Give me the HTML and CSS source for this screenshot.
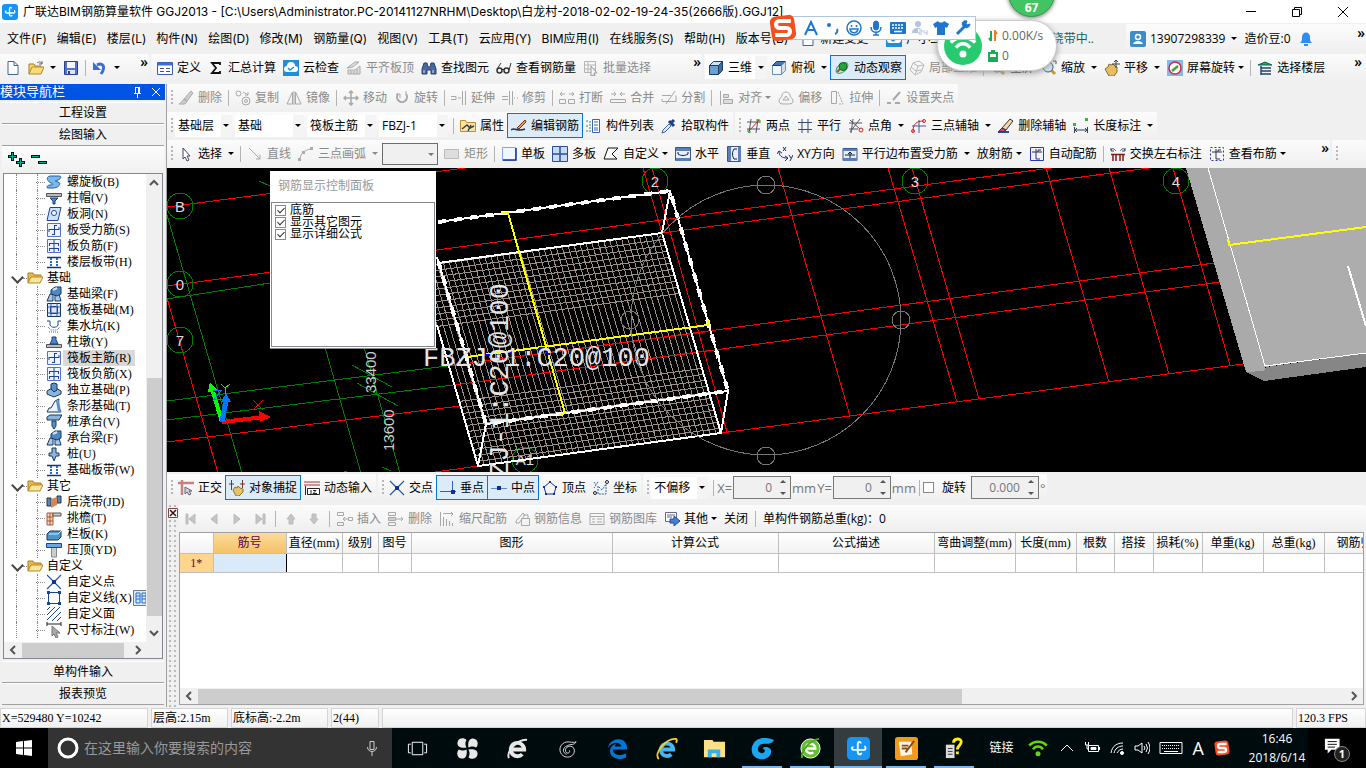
FILE: index.html
```html
<!DOCTYPE html>
<html lang="zh-CN">

<head>
    <meta charset="UTF-8">
    <meta name="viewport" content="width=device-width, initial-scale=1.0">
    <title>广联达BIM钢筋算量软件 GGJ2013</title>
    <link rel="stylesheet" href="styles.css">
</head>

<body>
    <svg class="sprite" aria-hidden="true">
        <!-- app / file -->
        <symbol id="logo" viewBox="0 0 16 16"><rect width="16" height="16" rx="3" fill="#1595f5" stroke="none"/><path d="M9.5 4.5C9.500 3 7.500 3 7.500 5v5.500c0 2 2.500 2 2.500.500M4.500 7C3 7 3 9 5 9h6.500c2 0 1.500-2.500.500-2.500" stroke="#fff" stroke-width="1.300"/></symbol>
        <symbol id="new" viewBox="0 0 16 16"><path d="M3 1.500h6l4 4v9H3z" fill="#fff" stroke="#41659b"/><path d="M9 1.500v4h4" stroke="#41659b"/></symbol>
        <symbol id="open" viewBox="0 0 16 16"><path d="M1 14V4h5l1 2h6v2" fill="#f7d774" stroke="#a97b1c"/><path d="M1 14l3-7h12l-3 7z" fill="#fbdc7b" stroke="#b5862a"/><path d="M9 3c2-2 4-1 5 1m0-3v3h-3" stroke="#567"/></symbol>
        <symbol id="save" viewBox="0 0 16 16"><path d="M1.500 1.500h13v13h-13z" fill="#5572c9" stroke="#2b3f96"/><path d="M4 2h8v6H4z" fill="#f4f6fc" stroke="none"/><path d="M4 10h8v4H4z" fill="#dfe4f5" stroke="none"/><path d="M6 11v3" stroke="#2b3f96" stroke-width="2"/></symbol>
        <symbol id="undo" viewBox="0 0 16 16"><path d="M5 5c6-3 9 2 4 9" stroke="#3a6fd0" stroke-width="3"/><path d="M1 2v8h8z" fill="#3a6fd0" stroke="none"/></symbol>
        <!-- standard -->
        <symbol id="define" viewBox="0 0 16 16"><path d="M.5 2.500h15v12H.5z" fill="#fff" stroke="#3b5fae"/><path d="M1 4h14" stroke="#3b6fd6" stroke-width="3"/><path d="M3 8.500h4M3 11.500h4M9 8.500h4M9 11.500h4" stroke="#456"/></symbol>
        <symbol id="sigma" viewBox="0 0 16 16"><path d="M12 5V3H4l4 5-4 5h8v-2" stroke="#111" stroke-width="1.800"/></symbol>
        <symbol id="cloud" viewBox="0 0 16 16"><path d="M0 0h16v16H0z" fill="#1f8fdc" stroke="none"/><path d="M4 12a3 3 0 0 1 0-6 4 4 0 0 1 8 0 3 3 0 0 1 0 6z" fill="#fff" stroke="none"/><path d="M5 8l2 2 4-3" stroke="#1f8fdc" stroke-width="1.500"/></symbol>
        <symbol id="level" viewBox="0 0 16 16"><path d="M1 8l8-6h4L7 7zM2 10v4h12V6l-5 4zM5 11v3M8 11v3M11 9v5" stroke="#aaa" fill="#ddd"/></symbol>
        <symbol id="binoc" viewBox="0 0 16 16"><path d="M1 9l2-6h3l1 4h2l1-4h3l2 6v5h-5v-4H6v4H1z" fill="#49689f" stroke="#2a3f6b"/><path d="M3 10v3M12 10v3" stroke="#c9dcf5"/></symbol>
        <symbol id="glasses" viewBox="0 0 16 16"><circle cx="3.500" cy="10.500" r="2.500" stroke="#333" stroke-width="1.500"/><circle cx="10.500" cy="10.500" r="2.500" stroke="#333" stroke-width="1.500"/><path d="M6 9.500h2M1 9l4-6M13 10l2-7" stroke="#333"/></symbol>
        <symbol id="batch" viewBox="0 0 16 16"><path d="M1.500 1.500h11v11h-11zM1 5h11M1 9h11M5 1v11" stroke="#b5b5b5"/><path d="M8 6l6 7h-3l1 3-2-1-2 1z" fill="#f4f4f4" stroke="#999"/></symbol>
        <!-- view -->
        <symbol id="cube" viewBox="0 0 16 16"><path d="M1.500 5.500h9v9h-9z" fill="#6f9fd0" stroke="#1d3d66"/><path d="M1.500 5.500l4-4h9l-4 4z" fill="#cfe2f5" stroke="#1d3d66"/><path d="M10.500 5.500l4-4v9l-4 4z" fill="#3f6ea5" stroke="#1d3d66"/></symbol>
        <symbol id="cubetop" viewBox="0 0 16 16"><path d="M1.500 5.500h9v9h-9z" fill="#f2f7fc" stroke="#6a8fbb"/><path d="M1.500 5.500l4-4h9l-4 4z" fill="#3f78b8" stroke="#1d3d66"/><path d="M10.500 5.500l4-4v9l-4 4z" fill="#cfe0f2" stroke="#6a8fbb"/></symbol>
        <symbol id="orbit" viewBox="0 0 16 16"><ellipse cx="8" cy="8" rx="7" ry="4" transform="rotate(-40 8 8)" stroke="#5a8f74" fill="#bfe6d0"/><circle cx="9" cy="6.500" r="4" fill="#28a23a" stroke="#146022"/><path d="M3 12l3-3" stroke="#d33" stroke-width="2"/></symbol>
        <symbol id="part3d" viewBox="0 0 16 16"><path d="M1 10l3-7 6-2 5 4-3 7-6 3zM4 3l5 3 6-1M9 6l-3 9M2 7l5 4 6-1" stroke="#bbb"/></symbol>
        <symbol id="lens" viewBox="0 0 16 16"><path d="M10 10l4 4" stroke="#c99a2e" stroke-width="3"/><circle cx="7" cy="7" r="5" fill="#d9ecfb" stroke="#34547e"/><path d="M1 4V1h3M15 4V1h-3" stroke="#34547e"/></symbol>
        <symbol id="hand" viewBox="0 0 16 16"><path d="M1 9l3-2 1-3 2 1 2-1 2 2 2 1v5l-3 4H5z" fill="#e6bd62" stroke="#8d6a22"/><path d="M12 0v8M8 4h8M10 2l2-2 2 2" stroke="#345"/></symbol>
        <symbol id="screenrot" viewBox="0 0 16 16"><path d="M0 0h16v16H0z" fill="#7fbde8" stroke="none"/><circle cx="8" cy="8" r="6" fill="#fff" stroke="#d24" stroke-width="1.500"/><path d="M5 11l6-5" stroke="#3a3" stroke-width="2.500"/></symbol>
        <symbol id="floors" viewBox="0 0 16 16"><path d="M1 5l7-3 7 3z" fill="#2c9a78" stroke="#14604a"/><path d="M4 8h10M4 11h10M4 14h10M4 6v9" stroke="#24446e" stroke-width="1.500"/></symbol>
        <!-- edit -->
        <symbol id="brush" viewBox="0 0 16 16"><path d="M6 9l7-8 2 2-6 8zM6 9l3 2c-1 4-4 3-8 3 3-1 3-4 5-5z" fill="#ccc" stroke="#aaa"/></symbol>
        <symbol id="copy" viewBox="0 0 16 16"><circle cx="3.500" cy="3.500" r="2.500"/><circle cx="11" cy="11" r="4"/><circle cx="11" cy="11" r="1.500"/><path d="M8 2l5 3m0-3v3h-3"/></symbol>
        <symbol id="mirror" viewBox="0 0 16 16"><path d="M6.500 2v12H1zM9.500 2v12H15zM8 1v14"/></symbol>
        <symbol id="move" viewBox="0 0 16 16"><path d="M8 1v14M1 8h14M6 3l2-2 2 2M6 13l2 2 2-2M3 6L1 8l2 2M13 6l2 2-2 2" stroke-width="1.500"/></symbol>
        <symbol id="rotate" viewBox="0 0 16 16"><path d="M4 4a5 5 0 1 0 8 0" stroke-width="2"/><path d="M2 4h4v4M12 4V1"/></symbol>
        <symbol id="extend" viewBox="0 0 16 16"><path d="M0 6.500h5v3H0M7 8h3M11.500 1v14M14.500 1v14"/></symbol>
        <symbol id="trim" viewBox="0 0 16 16"><path d="M0 6.500h6M0 9.500h6M7.500 1v14M10.500 1v14M12 8h1M15 8h1"/></symbol>
        <symbol id="break" viewBox="0 0 16 16"><path d="M1 4h5M10 4h5M3 2L1 4l2 2M13 2l2 2-2 2M.5 9.500h6v4h-6zM9.500 9.500h6v4h-6z"/></symbol>
        <symbol id="merge" viewBox="0 0 16 16"><path d="M1 4h5M10 4h5M4 2l2 2-2 2M12 2l-2 2 2 2M.5 9.500h15v3H.5z"/></symbol>
        <symbol id="split" viewBox="0 0 16 16"><path d="M1 5.500h9M1 11.500h14v-6M1 11V9M14 1L5 14"/></symbol>
        <symbol id="align" viewBox="0 0 16 16"><path d="M2.500 1v14M5.500 9.500h9v4h-9zM5.500 4.500h5v3h-5z" fill="#ddd"/></symbol>
        <symbol id="offset" viewBox="0 0 16 16"><path d="M1 11c0-3 3-3 3-6 1-4 7-4 8 0 0 3 3 3 3 6 0 3-3 3-7 3s-7 0-7-3z"/><path d="M5 10l3-4 3 4z"/></symbol>
        <symbol id="stretch" viewBox="0 0 16 16"><path d="M2.500 1.500h5v12h-5z"/><path d="M9 2l5 12H9" stroke-dasharray="2 1"/></symbol>
        <symbol id="grippt" viewBox="0 0 16 16"><path d="M1 13h4M7 10l7-8M9 13h5" stroke-width="2"/></symbol>
        <!-- component -->
        <symbol id="props" viewBox="0 0 16 16"><path d="M.5 2.500h5l1 2h9v9H.5z" fill="#fbe3a4" stroke="#c18a2a"/><path d="M2 11l5-4 3 3 4-2M8 13l3-6" stroke="#345" stroke-width="1.500"/></symbol>
        <symbol id="editbar" viewBox="0 0 16 16"><path d="M0 12c4-3 6 2 14-1" stroke="#234" stroke-width="1.500"/><path d="M6 10l8-8 1 2-7 7z" fill="#e9a13b" stroke="#7c2a1c"/></symbol>
        <symbol id="list" viewBox="0 0 16 16"><path d="M0 3h3M0 8h3M0 13h3M4 3v11" stroke="#2f8f5b" stroke-dasharray="2 1"/><path d="M6.500 1.500h7v13h-7z" fill="#fff" stroke="#3a62ad"/><path d="M8 4h4M8 7h4M8 10h4M8 12h4" stroke="#3a62ad"/></symbol>
        <symbol id="pick" viewBox="0 0 16 16"><path d="M1 15l1-3 6-6 2 2-6 6z" fill="#dfeafa" stroke="#3a62ad"/><path d="M8 3l5 5M10 5l3-3" stroke="#1d3f8c" stroke-width="3"/></symbol>
        <symbol id="axis2" viewBox="0 0 16 16"><path d="M1 4h13M1 11h13M5 1l-2 14M12 1l-2 14" stroke="#556"/><path d="M3 13L13 2" stroke="#b22"/><path d="M10 2h4v3M2 11v3h3" stroke="#2a2"/></symbol>
        <symbol id="axispar" viewBox="0 0 16 16"><path d="M1 4.500h14M1 11.500h14M5 1v14M11 1v14" stroke="#334a7c"/></symbol>
        <symbol id="axisang" viewBox="0 0 16 16"><path d="M1 5h13M1 11h9M5 1L3 15M12 1L2 14M2 2l10 9" stroke="#556"/><circle cx="13" cy="12" r="2" stroke="#d22"/></symbol>
        <symbol id="axis3" viewBox="0 0 16 16"><path d="M2 14C2 6 5 3 13 3" stroke="#d22"/><path d="M1 8h14M8 2v13" stroke="#44549c"/><circle cx="13" cy="3" r="1.500" stroke="#d22"/><circle cx="2" cy="13" r="1.500" stroke="#d22"/></symbol>
        <symbol id="erase" viewBox="0 0 16 16"><path d="M0 14h11" stroke="#234f9c" stroke-width="2"/><path d="M4 10l8-9 3 2-7 9z" fill="#f3d9a0" stroke="#334"/><path d="M4 10l4 2-3 2-4-1z" fill="#d46" stroke="#334"/></symbol>
        <symbol id="dim" viewBox="0 0 16 16"><path d="M1.500 9v6M14.500 9v6M2 12h12M4 10l-2 2 2 2M12 10l2 2-2 2" stroke="#345"/><path d="M0 5h3v3H0zM12 0h3v3h-3z" fill="#3b3" stroke="none"/></symbol>
        <!-- draw -->
        <symbol id="pointer" viewBox="0 0 16 16"><path d="M5 2v11l2-2 2 4 2-1-2-4h3z" fill="#fff" stroke="#446"/></symbol>
        <symbol id="line" viewBox="0 0 16 16"><path d="M2 2l11 11M13 9v4H9"/></symbol>
        <symbol id="arc" viewBox="0 0 16 16"><path d="M2 14C2 8 6 4 13 3"/><path d="M0 12h3v3H0zM12 1h3v3h-3zM4 5h3v3H4z" fill="#aaa" stroke="none"/></symbol>
        <symbol id="rect" viewBox="0 0 16 16"><path d="M.5 3.500h14v9H.5z" fill="#ddd" stroke="#bbb"/></symbol>
        <symbol id="slab" viewBox="0 0 16 16"><path d="M1.500 1.500h13v13h-13z" fill="#f0f6ff" stroke="#8aa6e0"/><path d="M2 14h13V2" stroke="#13309a" stroke-width="1.500"/></symbol>
        <symbol id="slabs" viewBox="0 0 16 16"><path d="M.5.5h15v15H.5z" fill="#c6dbf5" stroke="#2b4f96"/><path d="M8 1v14M1 8h14" stroke="#2b4f96" stroke-width="1.500"/></symbol>
        <symbol id="poly" viewBox="0 0 16 16"><path d="M5 2h10L9 8l5 5H1z" fill="#fff" stroke="#111"/></symbol>
        <symbol id="horiz" viewBox="0 0 16 16"><path d="M.5 1.500h15v13H.5z" fill="#e6effa" stroke="#3a5590"/><path d="M1 2h14v3H1zM1 12h14v3H1z" fill="#5d7fb8" stroke="none"/><path d="M3 6v2c3 2 7 2 10 0V6" stroke="#123"/></symbol>
        <symbol id="vert" viewBox="0 0 16 16"><path d="M1.500.5h13v15h-13z" fill="#e6effa" stroke="#3a5590"/><path d="M2 1h3v14H2zM12 1h3v14h-3z" fill="#5d7fb8" stroke="none"/><path d="M11 3H8c-2 3-2 7 0 10h3" stroke="#123"/></symbol>
        <symbol id="xy" viewBox="0 0 16 16"><path d="M2 5c0 5 3 7 8 7M0 8l2-3 3 2M8 10l3 2-3 3M6 1l3 4M9 1L6 5M12 9l2 3m2-3l-3 6" stroke="#1c2f6e"/></symbol>
        <symbol id="edgebar" viewBox="0 0 16 16"><path d="M1 2.500h14v12H1z" fill="#e6effa" stroke="#3a5590"/><path d="M1 3h14v2H1zM1 12h14v3H1z" fill="#5d7fb8" stroke="none"/><path d="M3 9h10M8 6v6M6 8l2-2 2 2" stroke="#123"/></symbol>
        <symbol id="barS" viewBox="0 0 16 16"><path d="M1.500 1.500h13v13h-13z" fill="#eef3fe" stroke="#5672c8"/><path d="M3 7.500h10M3 7v3M13 5v3M8.500 3v10M6 12.500h3M8 3.500h3" stroke="#1c458f"/></symbol>
        <symbol id="barF" viewBox="0 0 16 16"><path d="M1.500 1.500h13v13h-13z" fill="#eef3fe" stroke="#5672c8"/><path d="M3 5.500h10M3 10.500h10M8 2v12M3.500 5v3M12.500 5v3M3.500 10v3M12.500 10v3" stroke="#1c458f"/></symbol>
        <symbol id="autobar" viewBox="0 0 16 16"><path d="M1.500 1.500h13v13h-13z" fill="#eef3fe" stroke="#2a36b0"/><path d="M3 6h10M7 3v10M7 13h4M9 6V4h3" stroke="#334"/></symbol>
        <symbol id="swap" viewBox="0 0 16 16"><path d="M1 4c2-3 4 0 5 1M15 4c-2-3-4 0-5 1M1 2v3h3M15 2v3h-3" stroke="#345"/><path d="M1 8.500h14M3 9v6M6 9v6M10 9v6M13 9v6" stroke="#7c1c1c" stroke-width="1.500"/></symbol>
        <symbol id="viewbar" viewBox="0 0 16 16"><path d="M1.500 1.500h13v13h-13z" stroke="#2a36b0" stroke-dasharray="2 2"/><path d="M3 6h10M7 3v10M7 13h4M9 6V4h3" stroke="#334"/></symbol>
        <!-- snap -->
        <symbol id="ortho" viewBox="0 0 16 16"><path d="M0 3h16M4 0v15" stroke="#c98080" stroke-width="2.500"/><path d="M7 7v7l2-2 2 3 2-1-2-3h3z" fill="#ccd4dc" stroke="#667"/></symbol>
        <symbol id="osnap" viewBox="0 0 16 16"><path d="M2.500 0v10M13.500 0v8M0 4h5M11 4h5" stroke="#733"/><path d="M4 10l2-3 2 1 1-2 2 2 3 1v3l-4 4H7z" fill="#e6c367" stroke="#94702a"/></symbol>
        <symbol id="dyn" viewBox="0 0 16 16"><path d="M0 2h16M0 5h16" stroke="#a33"/><path d="M3.500 8.500h12v6h-12z" fill="#fff" stroke="#222"/><path d="M7 10v4M9 10.500h3l-3 3h4M1.500 6v9" stroke="#222"/></symbol>
        <symbol id="cross" viewBox="0 0 16 16"><path d="M1 1l14 14M15 1L1 15" stroke="#235a9e" stroke-width="1.200"/><path d="M6 6h4v4H6z" fill="#12309a" stroke="none"/></symbol>
        <symbol id="perp" viewBox="0 0 16 16"><path d="M0 11.500h16M12.500 1v11" stroke="#2d62b0"/><path d="M11 10h4v4h-4z" fill="#12309a" stroke="none"/></symbol>
        <symbol id="mid" viewBox="0 0 16 16"><path d="M0 8.500h16" stroke="#5b8ed0"/><path d="M6 6h4v4H6z" fill="#12309a" stroke="none"/></symbol>
        <symbol id="vertex" viewBox="0 0 16 16"><path d="M8 2l6 5-2 7H4L2 7z" stroke="#12309a"/><path d="M7 1h2v2H7zM1 6h2v2H1zM13 6h2v2h-2zM3 13h2v2H3zM11 13h2v2h-2z" fill="#12309a" stroke="none"/></symbol>
        <symbol id="coord" viewBox="0 0 16 16"><path d="M1 2l2 3M5 2L1 8M5 14V6l4 4 4-6v10z" stroke="#2d62b0" stroke-dasharray="2 1"/><circle cx="2" cy="13" r="1.500" stroke="#222"/><circle cx="14" cy="2" r="1.500" stroke="#222"/></symbol>
        <!-- record -->
        <symbol id="first" viewBox="0 0 16 16"><path d="M3 3h2v10H3zM12 3v10L6 8z" fill="#c4c4c4" stroke="#bbb"/></symbol>
        <symbol id="prev" viewBox="0 0 16 16"><path d="M11 3v10L5 8z" fill="#c4c4c4" stroke="#bbb"/></symbol>
        <symbol id="next" viewBox="0 0 16 16"><path d="M5 3v10l6-5z" fill="#c4c4c4" stroke="#bbb"/></symbol>
        <symbol id="last" viewBox="0 0 16 16"><path d="M11 3h2v10h-2zM4 3v10l6-5z" fill="#c4c4c4" stroke="#bbb"/></symbol>
        <symbol id="up" viewBox="0 0 16 16"><path d="M8 3l4 5h-2v5H6V8H4z" fill="#c4c4c4" stroke="#bbb"/></symbol>
        <symbol id="down" viewBox="0 0 16 16"><path d="M8 13l4-5h-2V3H6v5H4z" fill="#c4c4c4" stroke="#bbb"/></symbol>
        <symbol id="insrow" viewBox="0 0 16 16"><path d="M.5 1.500h6v3h-6zM.5 11.500h6v3h-6zM6 8h5M8 6L6 8l2 2M11.500 6.500h4v3h-4z"/></symbol>
        <symbol id="delrow" viewBox="0 0 16 16"><path d="M.5 1.500h7v3h-7zM.5 11.500h7v3h-7zM1 8h14M13 6l2 2-2 2M.5 6.500h7v3h-7z"/></symbol>
        <symbol id="scale" viewBox="0 0 16 16"><path d="M1.500 1v14M4 2.500h10M12 1l2 2-2 2M4.500 6v9M7.500 8v7M10.500 10v5M13.500 12v3"/></symbol>
        <symbol id="info" viewBox="0 0 16 16"><path d="M2 10l7-8 2 2-6 8H2zM7.500 7.500h8v7h-8zM9 4h5v4"/></symbol>
        <symbol id="lib" viewBox="0 0 16 16"><path d="M1 2.500h14v11H1zM1 5.500h14M3 8h3M3 11h3M8 8h5M8 11h5"/></symbol>
        <symbol id="other" viewBox="0 0 16 16"><path d="M1.500 1.500h11v9h-11zM3 4h8M3 6h5" stroke="#668" fill="#fff"/><path d="M6 8h4V5l6 5-6 5v-3H6z" fill="#4a7fd8" stroke="#234a94"/></symbol>
        <!-- tree -->
        <symbol id="t-spiral" viewBox="0 0 16 16"><path d="M4 2h9c3 0 2 3-1 4s-4 1 0 2 1 6-5 6H2c-2 0-1-3 2-3s4-1 1-2-6-6-1-7z" fill="#7db8e8" stroke="#1f5ca0"/></symbol>
        <symbol id="t-cap" viewBox="0 0 16 16"><path d="M.5 3.500h15v3H.5z" fill="#bbb" stroke="#555"/><path d="M4 8h8l-3 3v3H7v-3z" fill="#4f86d0" stroke="#153d80"/></symbol>
        <symbol id="t-hole" viewBox="0 0 16 16"><path d="M4 1.500h11l-3 13H1z" fill="#cfe0f8" stroke="#1c458f"/><circle cx="8" cy="7" r="2.500" fill="#fff" stroke="#1c458f"/></symbol>
        <symbol id="t-strip" viewBox="0 0 16 16"><path d="M1 3.500h14M1 13.500h14" stroke="#13357c" stroke-width="1.500"/><path d="M5 4v9M11 4v9" stroke="#2c66c8" stroke-width="2" stroke-dasharray="2 1"/></symbol>
        <symbol id="t-beam" viewBox="0 0 16 16"><path d="M1 15l3-7h3v7zM9 15V8h4l2 7z" fill="#a9c9ea" stroke="#17395f"/><path d="M5 8V4l4-3h6v7l-4 2z" fill="#4f86c4" stroke="#17395f"/><path d="M7 4l4-2" stroke="#cfe3f7" stroke-width="2"/></symbol>
        <symbol id="t-raft" viewBox="0 0 16 16"><path d="M1.500 1.500h13v13h-13zM4.500 4.500h7v7h-7z" fill="#dbe8fb" stroke="#12326e"/><path d="M5 1.500v13M11 1.500v13M1.500 5h13M1.500 11h13" stroke="#3a5fa8"/></symbol>
        <symbol id="t-pit" viewBox="0 0 16 16"><path d="M1 3h3v4c1 3 7 3 8 0V3h3" stroke="#1c458f"/><path d="M2 9l3 3 6 0 3-3M3 14h10" stroke="#2c66c8" stroke-dasharray="1 1"/></symbol>
        <symbol id="t-pier" viewBox="0 0 16 16"><path d="M.5 10.500h15v3H.5z" fill="#bbb" stroke="#555"/><path d="M4 10l2-4V3h4v3l2 4z" fill="#4f86d0" stroke="#153d80"/></symbol>
        <symbol id="t-iso" viewBox="0 0 16 16"><path d="M1 9l7-4 7 4v3l-7 3-7-3z" fill="#8cb4dc" stroke="#17395f"/><path d="M5 7V2l3-1 3 1v6l-3 2z" fill="#5c92c8" stroke="#17395f"/></symbol>
        <symbol id="t-tri" viewBox="0 0 16 16"><path d="M1 14l2-4h2l4-7 4-2-1 6 3 7z" fill="#eef4fc" stroke="#17395f"/><path d="M10 3l3-1 2 12h-3z" fill="#5c92c8" stroke="none"/></symbol>
        <symbol id="t-pilecap" viewBox="0 0 16 16"><path d="M1 3l3-2h12l-3 5H1z" fill="#8cb4dc" stroke="#17395f"/><path d="M6 7h4v5l-2 3-2-3z" fill="#5c92c8" stroke="#17395f"/></symbol>
        <symbol id="t-pile" viewBox="0 0 16 16"><path d="M6 2h4v5h3v3h-3l-2 5-2-5H3V7h3z" fill="#8cb4dc" stroke="#17395f"/></symbol>
        <symbol id="t-post" viewBox="0 0 16 16"><path d="M1 4h4v8H1zM11 2h4v7h-4z" fill="#5c82b8" stroke="#333"/><path d="M5 5l6-2v8l-6 3z" fill="#d08a5a" stroke="none"/></symbol>
        <symbol id="t-eave" viewBox="0 0 16 16"><path d="M1 3h6v12H1zM1 7h6M1 11h6M4 3v12" fill="#f5d3bc" stroke="#a35b36"/><path d="M7 3h8v3H7z" fill="#ccc" stroke="#555"/></symbol>
        <symbol id="t-rail" viewBox="0 0 16 16"><path d="M1 8l3-3h11v6l-3 3H1z" fill="#4f96c8" stroke="#17395f"/><path d="M3 8h9l3-3" stroke="#d5ebfa"/></symbol>
        <symbol id="t-coping" viewBox="0 0 16 16"><path d="M.5 1.500h15v4H.5z" fill="#6aa8e4" stroke="#1c458f"/><path d="M5.500 6v9h5V6" fill="#ccc" stroke="#888"/></symbol>
        <symbol id="t-cline" viewBox="0 0 16 16"><path d="M2.500 2.500h11v11h-11z" stroke="#1c458f"/><path d="M1 1h3v3H1zM12 1h3v3h-3zM1 12h3v3H1zM12 12h3v3h-3z" fill="#1c458f" stroke="none"/></symbol>
        <symbol id="t-cface" viewBox="0 0 16 16"><path d="M1 4l3-3M1 9l8-8M1 14L14 1M6 15l9-9M11 15l4-4" stroke="#1c458f"/></symbol>
        <symbol id="t-dim" viewBox="0 0 16 16"><path d="M1 0v4M15 0v4M1 2h14" stroke="#222"/><path d="M6 4v10l2-2 2 4 2-1-2-4h4z" fill="#aaa" stroke="#777"/></symbol>
        <symbol id="t-folder" viewBox="0 0 16 16"><path d="M1 13V3h5l1 2h7v3" fill="#e9b94a" stroke="#a97b1c"/><path d="M1 13l3-6h12l-3 6z" fill="#fbe6a0" stroke="#b5862a"/></symbol>
        <symbol id="panes" viewBox="0 0 16 16"><path d="M.5.5h15v15H.5z" fill="#dceafa" stroke="#778"/><path d="M3 3h4v10H3zM9 3h4v10H9zM3 6h4M3 9h4M9 6h4M9 9h4" stroke="#1c6fd0"/></symbol>
        <!-- taskbar and tray -->
        <symbol id="wifi" viewBox="0 0 16 16"><path d="M1 6c4-4 10-4 14 0M4 9c2-3 6-3 8 0" stroke-width="2"/><circle cx="8" cy="12.500" r="2" fill="currentColor" stroke="none"/></symbol>
        <symbol id="sogou" viewBox="0 0 16 16"><rect x="1" y="1" width="14" height="14" rx="3" fill="#f4501e" stroke="none" transform="rotate(-8 8 8)"/><path d="M12.500 4H6a2 2 0 0 0 0 4h4a2 2 0 0 1 0 4H3.500" stroke="#fff" stroke-width="2.300"/></symbol>
        <symbol id="ebrowser" viewBox="0 0 24 24"><path d="M5 13h14a7 7 0 1 0-2 5" stroke-width="4"/><path class="orbit" d="M3 22C0 15 12 2 22 3" stroke-width="2"/></symbol>
    </svg>

    <header class="titlebar">
        <svg class="icon"><use href="#logo"/></svg>
        <h1>广联达BIM钢筋算量软件 GGJ2013 - [C:\Users\Administrator.PC-20141127NRHM\Desktop\白龙村-2018-02-02-19-24-35(2666版).GGJ12]</h1>
        <div class="window-buttons">
            <button aria-label="最小化"><svg viewBox="0 0 12 12"><path d="M1 5.500h10"/></svg></button>
            <button aria-label="还原"><svg viewBox="0 0 12 12"><path d="M1.500 3.500h7v7h-7zM3.500 3.500v-2h7v7h-2"/></svg></button>
            <button aria-label="关闭"><svg viewBox="0 0 12 12"><path d="M1 1l10 10M11 1L1 11"/></svg></button>
        </div>
    </header>

    <div class="menubar">
        <nav class="menu">
            <button>文件(F)</button><button>编辑(E)</button><button>楼层(L)</button><button>构件(N)</button><button>绘图(D)</button><button>修改(M)</button><button>钢筋量(Q)</button><button>视图(V)</button><button>工具(T)</button><button>云应用(Y)</button><button>BIM应用(I)</button><button>在线服务(S)</button><button>帮助(H)</button><button>版本号(B)</button>
        </nav>
        <button class="tool"><svg class="icon"><use href="#new"/></svg>新建变更<i class="arrow"></i></button>
        <button class="tool"><svg class="icon"><use href="#cloud"/></svg>广小二</button>
        <span class="notice">浇带中..</span>
        <div class="toolbar account">
            <button class="tool"><svg class="icon" viewBox="0 0 16 16"><rect width="16" height="16" rx="2" fill="#3a8fca" stroke="none"/><circle cx="8" cy="6" r="2.500" stroke="#fff" stroke-width="1.500"/><path d="M3 13c1-4 9-4 10 0z" fill="#fff" stroke="none"/></svg>13907298339<i class="arrow"></i></button>
            <button class="tool">造价豆:0</button>
            <button class="tool" aria-label="消息"><svg class="icon" viewBox="0 0 16 16"><path d="M2 12c2-2 2-3 2-6 0-6 8-6 8 0 0 3 0 4 2 6z" fill="#2f8df0" stroke="none"/><path d="M6 14h4" stroke="#2f8df0" stroke-width="2"/></svg></button>
            <span class="more">»</span>
        </div>
    </div>

    <div class="toolrow">
        <div class="toolbar file">
            <button class="tool" aria-label="新建"><svg class="icon"><use href="#new"/></svg></button>
            <button class="tool" aria-label="打开"><svg class="icon"><use href="#open"/></svg><i class="arrow"></i></button>
            <button class="tool" aria-label="保存"><svg class="icon"><use href="#save"/></svg></button>
            <i class="sep"></i>
            <button class="tool" aria-label="撤销"><svg class="icon"><use href="#undo"/></svg><i class="arrow"></i></button>
            <span class="more">»</span>
        </div>
        <div class="toolbar standard">
            <button class="tool"><svg class="icon"><use href="#define"/></svg>定义</button>
            <button class="tool"><svg class="icon"><use href="#sigma"/></svg>汇总计算</button>
            <button class="tool"><svg class="icon"><use href="#cloud"/></svg>云检查</button>
            <button class="tool" disabled><svg class="icon"><use href="#level"/></svg>平齐板顶</button>
            <button class="tool"><svg class="icon"><use href="#binoc"/></svg>查找图元</button>
            <button class="tool"><svg class="icon"><use href="#glasses"/></svg>查看钢筋量</button>
            <button class="tool" disabled><svg class="icon"><use href="#batch"/></svg>批量选择</button>
            <span class="more">»</span>
        </div>
        <div class="toolbar view grow">
            <button class="tool split"><svg class="icon"><use href="#cube"/></svg>三维<i class="arrow"></i></button>
            <button class="tool"><svg class="icon"><use href="#cubetop"/></svg>俯视<i class="arrow"></i></button>
            <button class="tool on"><svg class="icon"><use href="#orbit"/></svg>动态观察</button>
            <button class="tool" disabled><svg class="icon"><use href="#part3d"/></svg>局部三维</button>
            <i class="sep"></i>
            <button class="tool"><svg class="icon"><use href="#lens"/></svg>全屏</button>
            <button class="tool"><svg class="icon"><use href="#lens"/></svg>缩放<i class="arrow"></i></button>
            <button class="tool"><svg class="icon"><use href="#hand"/></svg>平移<i class="arrow"></i></button>
            <button class="tool"><svg class="icon"><use href="#screenrot"/></svg>屏幕旋转<i class="arrow tight"></i></button>
            <i class="sep"></i>
            <button class="tool"><svg class="icon"><use href="#floors"/></svg>选择楼层</button>
            <span class="more">»</span>
        </div>
    </div>

    <div class="main">
        <aside class="nav">
            <div class="nav-title">模块导航栏
                <svg viewBox="0 0 30 12"><path d="M2 7.500h7M5.500 8v4M3.500 1v7M7.500 1v7M3 1.500h4M6.500 2v6M20 2l8 8M28 2l-8 8"/></svg>
            </div>
            <button class="nav-tab">工程设置</button>
            <button class="nav-tab">绘图输入</button>
            <div class="nav-tools">
                <svg viewBox="0 0 44 16"><path d="M0 4.500h9M4.500 0v9M8 10.500h9M12.500 6v9M23 4.500h9M30 10.500h9" stroke="#111" stroke-width="3"/><path d="M1 4.500h7M4.500 1v7M9 10.500h7M12.500 7v7M24 4.500h7M31 10.500h7" stroke="#0aa898"/></svg>
            </div>
            <div class="tree-box">
                <div class="tree-view">
                    <ul class="tree">
                        <li><svg class="icon"><use href="#t-spiral"/></svg>螺旋板(B)</li>
                        <li><svg class="icon"><use href="#t-cap"/></svg>柱帽(V)</li>
                        <li><svg class="icon"><use href="#t-hole"/></svg>板洞(N)</li>
                        <li><svg class="icon"><use href="#barS"/></svg>板受力筋(S)</li>
                        <li><svg class="icon"><use href="#barF"/></svg>板负筋(F)</li>
                        <li class="end"><svg class="icon"><use href="#t-strip"/></svg>楼层板带(H)</li>
                        <li class="group"><svg class="icon"><use href="#t-folder"/></svg>基础</li>
                        <li><svg class="icon"><use href="#t-beam"/></svg>基础梁(F)</li>
                        <li><svg class="icon"><use href="#t-raft"/></svg>筏板基础(M)</li>
                        <li><svg class="icon"><use href="#t-pit"/></svg>集水坑(K)</li>
                        <li><svg class="icon"><use href="#t-pier"/></svg>柱墩(Y)</li>
                        <li class="selected"><svg class="icon"><use href="#barS"/></svg><span>筏板主筋(R)</span></li>
                        <li><svg class="icon"><use href="#barF"/></svg>筏板负筋(X)</li>
                        <li><svg class="icon"><use href="#t-iso"/></svg>独立基础(P)</li>
                        <li><svg class="icon"><use href="#t-tri"/></svg>条形基础(T)</li>
                        <li><svg class="icon"><use href="#t-pilecap"/></svg>桩承台(V)</li>
                        <li><svg class="icon"><use href="#t-beam"/></svg>承台梁(F)</li>
                        <li><svg class="icon"><use href="#t-pile"/></svg>桩(U)</li>
                        <li class="end"><svg class="icon"><use href="#t-strip"/></svg>基础板带(W)</li>
                        <li class="group"><svg class="icon"><use href="#t-folder"/></svg>其它</li>
                        <li><svg class="icon"><use href="#t-post"/></svg>后浇带(JD)</li>
                        <li><svg class="icon"><use href="#t-eave"/></svg>挑檐(T)</li>
                        <li><svg class="icon"><use href="#t-rail"/></svg>栏板(K)</li>
                        <li class="end"><svg class="icon"><use href="#t-coping"/></svg>压顶(YD)</li>
                        <li class="group"><svg class="icon"><use href="#t-folder"/></svg>自定义</li>
                        <li><svg class="icon"><use href="#cross"/></svg>自定义点</li>
                        <li class="extra"><svg class="icon"><use href="#t-cline"/></svg>自定义线(X)<svg class="icon"><use href="#panes"/></svg></li>
                        <li><svg class="icon"><use href="#t-cface"/></svg>自定义面</li>
                        <li class="end"><svg class="icon"><use href="#t-dim"/></svg>尺寸标注(W)</li>
                    </ul>
                    <div class="vscroll">
                        <svg class="chev" viewBox="0 0 10 10"><path d="M1 7l4-4 4 4"/></svg>
                        <i class="thumb"></i>
                        <svg class="chev" viewBox="0 0 10 10"><path d="M1 3l4 4 4-4"/></svg>
                    </div>
                </div>
                <div class="hscroll">
                    <svg class="chev" viewBox="0 0 10 10"><path d="M7 1L3 5l4 4"/></svg>
                    <i class="thumb"></i>
                    <svg class="chev" viewBox="0 0 10 10"><path d="M3 1l4 4-4 4"/></svg>
                </div>
            </div>
            <button class="nav-tab">单构件输入</button>
            <button class="nav-tab">报表预览</button>
        </aside>

        <div class="work">
            <div class="toolrow">
                <div class="toolbar">
                    <i class="grip"></i>
                    <button class="tool" disabled><svg class="icon"><use href="#brush"/></svg>删除</button>
                    <i class="sep"></i>
                    <button class="tool" disabled><svg class="icon"><use href="#copy"/></svg>复制</button>
                    <button class="tool" disabled><svg class="icon"><use href="#mirror"/></svg>镜像</button>
                    <i class="sep"></i>
                    <button class="tool" disabled><svg class="icon"><use href="#move"/></svg>移动</button>
                    <button class="tool" disabled><svg class="icon"><use href="#rotate"/></svg>旋转</button>
                    <i class="sep"></i>
                    <button class="tool" disabled><svg class="icon"><use href="#extend"/></svg>延伸</button>
                    <button class="tool" disabled><svg class="icon"><use href="#trim"/></svg>修剪</button>
                    <i class="sep"></i>
                    <button class="tool" disabled><svg class="icon"><use href="#break"/></svg>打断</button>
                    <button class="tool" disabled><svg class="icon"><use href="#merge"/></svg>合并</button>
                    <button class="tool" disabled><svg class="icon"><use href="#split"/></svg>分割</button>
                    <i class="sep"></i>
                    <button class="tool" disabled><svg class="icon"><use href="#align"/></svg>对齐<i class="arrow tight"></i></button>
                    <button class="tool" disabled><svg class="icon"><use href="#offset"/></svg>偏移</button>
                    <button class="tool" disabled><svg class="icon"><use href="#stretch"/></svg>拉伸</button>
                    <i class="sep"></i>
                    <button class="tool" disabled><svg class="icon"><use href="#grippt"/></svg>设置夹点</button>
                </div>
            </div>
            <div class="toolrow">
                <div class="toolbar">
                    <i class="grip"></i>
                    <span class="combo short"><select aria-label="楼层"><option>基础层</option></select></span>
                    <span class="combo"><select aria-label="构件类型"><option>基础</option></select></span>
                    <span class="combo"><select aria-label="构件种类"><option>筏板主筋</option></select></span>
                    <span class="combo"><select aria-label="构件名称"><option>FBZJ-1</option></select></span>
                    <i class="sep"></i>
                    <button class="tool"><svg class="icon"><use href="#props"/></svg>属性</button>
                    <button class="tool on"><svg class="icon"><use href="#editbar"/></svg>编辑钢筋</button>
                    <button class="tool"><svg class="icon"><use href="#list"/></svg>构件列表</button>
                    <button class="tool"><svg class="icon"><use href="#pick"/></svg>拾取构件</button>
                </div>
                <div class="toolbar">
                    <i class="grip"></i>
                    <button class="tool"><svg class="icon"><use href="#axis2"/></svg>两点</button>
                    <button class="tool"><svg class="icon"><use href="#axispar"/></svg>平行</button>
                    <button class="tool"><svg class="icon"><use href="#axisang"/></svg>点角<i class="arrow"></i></button>
                    <button class="tool"><svg class="icon"><use href="#axis3"/></svg>三点辅轴<i class="arrow"></i></button>
                    <button class="tool"><svg class="icon"><use href="#erase"/></svg>删除辅轴</button>
                    <button class="tool"><svg class="icon"><use href="#dim"/></svg>长度标注<i class="arrow"></i></button>
                </div>
            </div>
            <div class="toolrow">
                <div class="toolbar grow">
                    <i class="grip"></i>
                    <button class="tool"><svg class="icon"><use href="#pointer"/></svg>选择<i class="arrow"></i></button>
                    <i class="sep"></i>
                    <button class="tool" disabled><svg class="icon"><use href="#line"/></svg>直线</button>
                    <button class="tool" disabled><svg class="icon"><use href="#arc"/></svg>三点画弧<i class="arrow"></i></button>
                    <span class="combo off"><select aria-label="画弧参数" disabled><option></option></select></span>
                    <button class="tool" disabled><svg class="icon"><use href="#rect"/></svg>矩形</button>
                    <i class="sep"></i>
                    <button class="tool"><svg class="icon"><use href="#slab"/></svg>单板</button>
                    <button class="tool"><svg class="icon"><use href="#slabs"/></svg>多板</button>
                    <button class="tool"><svg class="icon"><use href="#poly"/></svg>自定义<i class="arrow tight"></i></button>
                    <button class="tool"><svg class="icon"><use href="#horiz"/></svg>水平</button>
                    <button class="tool"><svg class="icon"><use href="#vert"/></svg>垂直</button>
                    <button class="tool"><svg class="icon"><use href="#xy"/></svg>XY方向</button>
                    <button class="tool"><svg class="icon"><use href="#edgebar"/></svg>平行边布置受力筋<i class="arrow"></i></button>
                    <button class="tool">放射筋<i class="arrow tight"></i></button>
                    <button class="tool"><svg class="icon"><use href="#autobar"/></svg>自动配筋</button>
                    <i class="sep"></i>
                    <button class="tool"><svg class="icon"><use href="#swap"/></svg>交换左右标注</button>
                    <button class="tool"><svg class="icon"><use href="#viewbar"/></svg>查看布筋<i class="arrow tight"></i></button>
                    <span class="more">»</span>
                </div>
                <div class="toolbar stub"><i class="grip"></i></div>
            </div>

            <div class="canvas">
                <svg class="scene" viewBox="167 168 1199 305" preserveAspectRatio="xMinYMin slice" shape-rendering="crispEdges">
                    <!-- axis grid -->
                    <path class="green" d="M167 215L242 473M167 299L270 283M167 401L447 366M167 420L453 385M325 347L361 473M364 347L400 473M259 181l11 5M352 365l40 22M357 383l41 23M344 471l5 2M382 467l9 4"/>
                    <path class="red" d="M167 207L465 168M167 286L1051 168M662 233L1149 168M448 366L1214 263M454 385L1220 282M167 442L460 406M721 433L1243 364M428 473l50-7M167 298L218 473"/>
                    <path class="red" d="M643 168L664 240M652 168L727 432M778 168L850 416M888 168L957 402M912 168L979 399M1046 168L1109 382M1109 168L1169 374M1173 168L1230 365"/>
                    <g class="green">
                        <circle cx="180" cy="206" r="13"/><circle cx="180" cy="284" r="13"/><circle cx="180" cy="340" r="13"/>
                        <circle cx="655" cy="181" r="13"/><circle cx="915" cy="181" r="13"/><circle cx="1176" cy="181" r="13"/>
                        <circle cx="525" cy="460" r="13"/>
                    </g>
                    <g class="mark">
                        <text x="180" y="212">B</text><text x="180" y="290">0</text><text x="180" y="346">7</text>
                        <text x="655" y="187">2</text><text x="915" y="187">3</text><text x="1176" y="187">4</text><text x="525" y="465">A1</text>
                    </g>
                    <!-- rebar mesh -->
                    <g class="mesh" transform="matrix(.99 -.135 .295 1 419 266)">
                        <path d="M0 100H245" stroke-width="200" stroke-dasharray="1 5"/>
                        <path d="M122 0V66M122 135V200" stroke-width="245" stroke-dasharray="1 5"/>
                    </g>
                    <path class="red" d="M454 385L712 350M448 366L705 332M663 236L718 424" opacity=".8"/>
                    <path class="white" d="M438 263L662 233L721 433L478 466L437 325M670 191l-8 42M728 391l-7 42M486 424l-8 42"/>
                    <path class="white" d="M438 222L670 191L728 391L486 424L437 257"/>
                    <path class="white dashes" d="M438 222L670 191L728 391L486 424L437 257"/>
                    <path class="yellow" d="M501 213h7L565 413l-6 2M467 357L708 325v-5"/>
                    <path d="M484 355h8M506 352h8M538 349q8-4 10 6" stroke="#00f" fill="none" stroke-width="2"/>
                    <g class="label">
                        <text x="423" y="366">FBZJ-1:C20@100</text>
                        <text transform="translate(508 510) rotate(-90)">FBZJ-1:C20@100</text>
                    </g>
                    <g class="size">
                        <text transform="translate(376 393) rotate(-90)">33400</text>
                        <text transform="translate(394 451) rotate(-90)">13600</text>
                    </g>
                    <!-- orbit ring -->
                    <g class="ring">
                        <circle cx="766" cy="320" r="135"/><circle cx="766" cy="185" r="9"/><circle cx="766" cy="456" r="9"/><circle cx="901" cy="320" r="9"/><circle cx="630" cy="320" r="9"/>
                    </g>
                    <!-- finished slab -->
                    <path d="M1186 168h22l57 199-1 6-18-1z" fill="#aaa"/>
                    <path d="M1208 168h158v185l-101 14z" fill="#adadad"/>
                    <path d="M1246 372l18-1 2-4 100-14v14l-102 14z" fill="#868686"/>
                    <path d="M1208 168l57 198 101-13" fill="none" stroke="#fff"/>
                    <path class="yellow" d="M1228 239l1 6 137-18"/>
                    <path d="M1348 266l18 60" stroke="#fff" stroke-width="2"/>
                    <!-- ucs -->
                    <path d="M222 422l42-5" stroke="red" stroke-width="4"/><path d="M259 411l12 6-11 5z" fill="red"/>
                    <path d="M222 422l-9-30" stroke="lime" stroke-width="4"/><path d="M208 392l2-10 8 9z" fill="lime"/>
                    <path d="M222 422l4-22" stroke="#07f" stroke-width="5"/><path d="M221 402l5-9 5 9z" fill="#07f"/>
                    <path d="M253 400l10 10M263 400l-10 10" stroke="red"/><path d="M221 384l4 4 5-4M225 388v6" stroke="lime" fill="none"/><path d="M213 390h9l-8 9h8" stroke="#07f" fill="none"/>
                </svg>
                <section class="float-panel">
                    <h2>钢筋显示控制面板</h2>
                    <div class="checks">
                        <label><input type="checkbox" checked>底筋</label>
                        <label><input type="checkbox" checked>显示其它图元</label>
                        <label><input type="checkbox" checked>显示详细公式</label>
                    </div>
                </section>
            </div>

            <div class="toolrow snap">
                <div class="toolbar">
                    <i class="grip"></i>
                    <button class="tool"><svg class="icon"><use href="#ortho"/></svg>正交</button>
                    <button class="tool on"><svg class="icon"><use href="#osnap"/></svg>对象捕捉</button>
                    <button class="tool"><svg class="icon"><use href="#dyn"/></svg>动态输入</button>
                </div>
                <div class="toolbar">
                    <i class="grip"></i>
                    <button class="tool"><svg class="icon"><use href="#cross"/></svg>交点</button>
                    <button class="tool on"><svg class="icon"><use href="#perp"/></svg>垂点</button>
                    <button class="tool on"><svg class="icon"><use href="#mid"/></svg>中点</button>
                    <button class="tool"><svg class="icon"><use href="#vertex"/></svg>顶点</button>
                    <button class="tool"><svg class="icon"><use href="#coord"/></svg>坐标</button>
                </div>
                <div class="toolbar">
                    <i class="grip"></i>
                    <span class="combo short"><select aria-label="偏移方式"><option>不偏移</option></select></span>
                    <i class="sep"></i>
                    <label class="dim" for="off-x">X=</label>
                    <span class="spin"><input type="text" id="off-x" value="0" disabled></span>
                    <span class="dim">mm</span>
                    <label class="dim" for="off-y">Y=</label>
                    <span class="spin"><input type="text" id="off-y" value="0" disabled></span>
                    <span class="dim">mm</span>
                    <i class="sep"></i>
                    <label class="turn"><input type="checkbox">旋转</label>
                    <span class="spin wide"><input type="text" aria-label="旋转角度" value="0.000" disabled></span>
                    <span class="dim">°</span>
                </div>
            </div>

            <div class="panel">
                <div class="panel-grip"><button aria-label="关闭面板"><svg viewBox="0 0 10 10"><path d="M.5.5h9v9h-9z" fill="#fff" stroke="#844"/><path d="M2 2l6 6M8 2L2 8" stroke="#311" stroke-width="1.500"/></svg></button></div>
                <div class="panel-body">
                    <div class="toolbar record">
                        <button class="tool" disabled aria-label="首行"><svg class="icon"><use href="#first"/></svg></button>
                        <button class="tool" disabled aria-label="上一行"><svg class="icon"><use href="#prev"/></svg></button>
                        <button class="tool" disabled aria-label="下一行"><svg class="icon"><use href="#next"/></svg></button>
                        <button class="tool" disabled aria-label="末行"><svg class="icon"><use href="#last"/></svg></button>
                        <i class="sep"></i>
                        <button class="tool" disabled aria-label="上移"><svg class="icon"><use href="#up"/></svg></button>
                        <button class="tool" disabled aria-label="下移"><svg class="icon"><use href="#down"/></svg></button>
                        <i class="sep"></i>
                        <button class="tool" disabled><svg class="icon"><use href="#insrow"/></svg>插入</button>
                        <button class="tool" disabled><svg class="icon"><use href="#delrow"/></svg>删除</button>
                        <button class="tool" disabled><svg class="icon"><use href="#scale"/></svg>缩尺配筋</button>
                        <button class="tool" disabled><svg class="icon"><use href="#info"/></svg>钢筋信息</button>
                        <button class="tool" disabled><svg class="icon"><use href="#lib"/></svg>钢筋图库</button>
                        <button class="tool"><svg class="icon"><use href="#other"/></svg>其他<i class="arrow tight"></i></button>
                        <button class="tool">关闭</button>
                        <i class="sep"></i>
                        <span class="total">单构件钢筋总重(kg)：0</span>
                    </div>
                    <div class="sheet">
                        <div class="sheet-view">
                            <table>
                                <colgroup><col class="w33"><col class="w73"><col class="w56"><col class="w36"><col class="w33"><col class="w201"><col class="w166"><col class="w156"><col class="w81"><col class="w61"><col class="w38"><col class="w39"><col class="w49"><col class="w61"><col class="w61"><col class="w73"></colgroup>
                                <thead>
                                    <tr><th></th><th class="current">筋号</th><th>直径(mm)</th><th>级别</th><th>图号</th><th>图形</th><th>计算公式</th><th>公式描述</th><th>弯曲调整(mm)</th><th>长度(mm)</th><th>根数</th><th>搭接</th><th>损耗(%)</th><th>单重(kg)</th><th>总重(kg)</th><th>钢筋归类</th></tr>
                                </thead>
                                <tbody>
                                    <tr><th>1*</th><td class="current"></td><td></td><td></td><td></td><td></td><td></td><td></td><td></td><td></td><td></td><td></td><td></td><td></td><td></td><td></td></tr>
                                </tbody>
                            </table>
                        </div>
                        <div class="hscroll">
                            <svg class="chev" viewBox="0 0 10 10"><path d="M7 1L3 5l4 4"/></svg>
                            <i class="thumb"></i>
                            <svg class="chev" viewBox="0 0 10 10"><path d="M3 1l4 4-4 4"/></svg>
                        </div>
                    </div>
                </div>
            </div>
        </div>
    </div>

    <footer class="statusbar">
        <span class="pos">X=529480 Y=10242</span><span class="height">层高:2.15m</span><span class="base">底标高:-2.2m</span><span class="count">2(44)</span><span class="fill"></span><span class="fps">120.3 FPS</span>
    </footer>

    <div class="taskbar">
        <button class="start" aria-label="开始"><svg viewBox="0 0 16 16"><path d="M0 2l7-1v6.500H0zM8 1l8-1v7.500H8zM0 8.500h7V15l-7-1zM8 8.500h8V16l-8-1z" fill="#fff"/></svg></button>
        <div class="search">
            <svg class="ring-icon" viewBox="0 0 22 22"><circle cx="11" cy="11" r="9"/></svg>
            <input type="text" aria-label="搜索" placeholder="在这里输入你要搜索的内容">
            <svg class="mic" viewBox="0 0 16 16"><path d="M6 1.500h4v8H6zM3.500 7c0 6 9 6 9 0M8 12v4"/></svg>
        </div>
        <div class="apps">
            <button class="wide" aria-label="任务视图"><svg viewBox="0 0 24 24"><path d="M6.500 5.500h11v13h-11zM5 7.500H2.500v9H5M19 7.500h2.500v9H19"/></svg></button>
            <button class="wide" aria-label="应用"><svg viewBox="0 0 24 24"><path d="M11 11C5 12 1 10 1.500 6 2 1 8 0 11 3c-2 3-1 6 0 8zM13 11C12 5 14 1 18 1.500c5 .500 6 6.500 3 9.500-3-2-6-1-8 0zM13 13c6-1 10 1 9.500 5-.500 5-6.500 6-9.500 3 2-3 1-6 0-8zM11 13c1 6-1 10-5 9.500-5-.500-6-6.500-3-9.500 3 2 6 1 8 0z" fill="#e8e8e8" stroke="none"/></svg></button>
            <button class="wide" aria-label="浏览器"><svg class="c-silver"><use href="#ebrowser"/></svg></button>
            <button class="wide" aria-label="搜狗"><svg viewBox="0 0 24 24"><path d="M21 5c-4 2-9-2-14 2-6 5-2 14 5 14 6 0 9-6 6-10-3-3-9-1-8 4 1 3 5 2 4-1M21 5c-2 4-6 2-9 4-6 2-5 8-1 9" stroke="#ddd"/></svg></button>
            <button class="wide" aria-label="Edge"><svg class="c-edge" viewBox="0 0 24 24"><path d="M7 13h15C23-1 5-1 2 11c3-4 6-5 9-5 3 0 5 2 5 4H9c1-2 1-2 2-3-9 2-10 15 3 16 3 0 5-1 7-2v-4c-5 3-13 3-14-4z" fill="currentColor" stroke="none"/></svg></button>
            <button aria-label="Internet Explorer"><svg class="c-ie" viewBox="0 0 24 24"><path d="M6 13h13a6.500 6.500 0 1 0-2 5" stroke-width="4"/><path d="M4 23C-2 17 12 1 22 2c1 1 1 2 0 4" stroke="#f6cf2c" stroke-width="2"/></svg></button>
            <button aria-label="文件资源管理器"><svg viewBox="0 0 24 24"><path d="M1 3h9l1 2h12v16H1z" fill="#fbe08a" stroke="none"/><path d="M5 21v-8h13v8h-4v-4H9v4z" fill="#35b0e8" stroke="none"/></svg></button>
            <button class="run" aria-label="搜狗浏览器"><svg viewBox="0 0 24 24"><path d="M24 3c-2 4-6 4-10 4-8 0-9 9-3 10 4 0 5-4 1-5 3-3 9-1 9 3 0 6-7 9-12 8C1 22-1 13 2 8 6 0 15 0 24 3z" fill="#1ba6f4" stroke="none"/></svg></button>
            <button class="run" aria-label="360浏览器"><svg viewBox="0 0 24 24"><circle cx="12" cy="12" r="10" fill="#62c030" stroke="#fff"/><path d="M7 12h10a5 5 0 1 0-2 4" stroke="#fff" stroke-width="2.500"/><path d="M3 22C2 14 12 3 21 2" stroke="#4a2" stroke-width="2"/></svg></button>
            <button class="run active" aria-label="广联达"><svg><use href="#logo"/></svg></button>
            <button class="run" aria-label="便笺"><svg viewBox="0 0 24 24"><rect width="24" height="24" rx="3" fill="#f29a1e" stroke="none"/><path d="M4 5h13l1 13-12 2z" fill="#fff8e8" stroke="none"/><path d="M7 9h7M7 12h6M11 16l9-12" stroke="#8a4a12" stroke-width="2"/></svg></button>
            <button class="run" aria-label="帮助"><svg viewBox="0 0 24 24"><path d="M3 8h9v14H3z" fill="#ddd" stroke="none"/><path d="M5 12h5M5 15h5M5 18h5" stroke="#333"/><path d="M11 6c0-5 8-5 8-1s-4 4-4 8M15 15v3" stroke="#ffec1a" stroke-width="3"/></svg></button>
        </div>
        <div class="tray">
            <span>链接</span>
            <svg class="c-wifi"><use href="#wifi"/></svg>
            <svg viewBox="0 0 16 16"><path d="M2 11l6-6 6 6"/></svg>
            <svg viewBox="0 0 16 16"><path d="M4.500 5.500h10v6h-10zM15.500 7v3M1.500 2v3h3V2M3 5v4h2"/><path d="M7 7.500h5v2H7z" fill="#fff"/></svg>
            <svg viewBox="0 0 16 16"><path d="M2 13C3 6 8 3 14 3M5 13c1-4 4-7 9-7M8 13c1-2 3-4 6-4"/><circle cx="13" cy="13" r="1.500" fill="#fff"/></svg>
            <svg viewBox="0 0 16 16"><path d="M1 6h3l4-3v10l-4-3H1zM10 6q2 2 0 4M12 4q3 4 0 8M14 2q4 6 0 12"/></svg>
            <svg class="kbd" viewBox="0 0 24 16"><path d="M1 2.500h22v11H1zM5 11.500h14"/><path d="M3 5.500h18M3 8.500h18" stroke-dasharray="1 1"/></svg>
            <span class="ime">A</span>
            <svg><use href="#sogou"/></svg>
        </div>
        <div class="clock"><span>16:46</span><span>2018/6/14</span></div>
        <button class="notify" aria-label="通知"><svg viewBox="0 0 24 24"><path d="M1 2h16v12H8l-4 4v-4H1z" fill="#fff" stroke="none"/><path d="M4 5h10M4 8h10M4 11h8" stroke="#000"/></svg><b>1</b></button>
    </div>

    <!-- floating desktop widgets -->
    <div class="netball">67</div>
    <div class="nettool">
        <span class="disc"><svg><use href="#wifi"/></svg></span>
        <div>
            <p><svg viewBox="0 0 10 12"><path d="M3 1v10M1 8l2 3" stroke="#1cab55" stroke-width="2"/><path d="M7 11V1l2 3" stroke="#f07a1a" stroke-width="2"/></svg>0.00K/s</p>
            <p><svg viewBox="0 0 10 12"><path d="M1 3h8v8H1zM3 1h4" stroke="#1cab55" stroke-width="2"/><path d="M1 7h8v4H1z" fill="#1cab55" stroke="none"/></svg>0</p>
        </div>
    </div>
    <div class="imebar">
        <svg class="imelogo"><use href="#sogou"/></svg>
        <svg viewBox="0 0 16 16"><path d="M2 15L8 2l6 13M4 10h8" stroke-width="2"/></svg>
        <svg viewBox="0 0 16 16"><circle cx="4" cy="5" r="2" fill="currentColor" stroke="none"/><path d="M12 9c1 2 0 4-2 5" stroke-width="2"/></svg>
        <svg viewBox="0 0 16 16"><circle cx="8" cy="8" r="7" stroke-width="1.500"/><path d="M4 9c1 5 7 5 8 0zM5.500 5v2M10.500 5v2" stroke-width="1.500"/></svg>
        <svg viewBox="0 0 16 16"><rect x="5.500" y="1" width="5" height="9" rx="2.500" fill="currentColor"/><path d="M3 7c0 7 10 7 10 0M8 12v3M5 15h6" stroke-width="1.500"/></svg>
        <svg viewBox="0 0 16 16"><rect y="2" width="16" height="12" rx="1" fill="currentColor" stroke="none"/><path d="M2 5h12M2 8h12" stroke="#fff" stroke-width="1.500" stroke-dasharray="2 1"/><path d="M4 11.500h8" stroke="#fff" stroke-width="1.500"/></svg>
        <svg class="pale" viewBox="0 0 16 16"><circle cx="6" cy="4" r="3" fill="currentColor" stroke="none"/><path d="M0 13c0-6 8-6 9-4H6v4z" fill="currentColor" stroke="none"/><path d="M7 10h3v2H7v2h3M12 10v3h3M15 10v5"/></svg>
        <svg viewBox="0 0 16 16"><path d="M5 1c1 2 5 2 6 0l5 3-2 4-2-1v8H4V7L2 8 0 4z" fill="currentColor" stroke="none"/></svg>
        <svg viewBox="0 0 16 16"><path d="M2 14l8-8" stroke-width="3"/><path d="M15 4l-3 1-1-1 1-3C8 0 6 3 8 6s7 2 7-2z" fill="currentColor"/></svg>
    </div>
</body>

</html>
```
FILE: styles.css
```css
* {
    box-sizing: border-box;
}

body {
    margin: 0;
    display: flex;
    flex-direction: column;
    height: 100vh;
    overflow: hidden;
    position: relative;
    background-color: #f0f0f0;
    color: #000;
    font-family: "Open Sans", "Noto Sans CJK SC", sans-serif;
    font-size: 12px;
    line-height: 16px;
    white-space: nowrap;
}

button,
input,
select {
    font: inherit;
    color: inherit;
    margin: 0;
    padding: 0;
    border: 0;
    background: none;
}

svg {
    display: block;
    flex: none;
    fill: none;
    stroke: currentColor;
}

.sprite {
    position: absolute;
    width: 0;
    height: 0;
}

.icon {
    width: 16px;
    height: 16px;
}

/* title and menu */
.titlebar {
    display: flex;
    align-items: center;
    height: 23px;
    flex: none;
    padding-left: 2px;
    gap: 5px;
    background: #fff;
}

.titlebar h1 {
    margin: 0;
    font-family: "Inter", "Noto Sans CJK SC", sans-serif;
    font-size: 12px;
    font-weight: 400;
}

.window-buttons {
    display: flex;
    margin-left: auto;
}

.window-buttons button {
    width: 46px;
    display: flex;
    justify-content: center;
}

.window-buttons svg {
    width: 12px;
    height: 12px;
}

.menubar {
    display: flex;
    align-items: center;
    height: 31px;
    flex: none;
}

.menu {
    display: flex;
    padding-left: 2px;
    margin-right: 4px;
    font-family: "Inter", "Noto Sans CJK SC", sans-serif;
}

.menu button {
    padding: 0 5px;
}

.notice {
    margin-left: auto;
    margin-right: 32px;
    color: #0a6464;
}

.toolbar.account {
    width: 240px;
    height: 29px;
    padding-left: 1px;
}

/* toolbars */
.toolrow {
    display: flex;
    gap: 2px;
    height: 28px;
    flex: none;
}

.toolbar {
    display: flex;
    align-items: center;
    gap: 1px;
    height: 27px;
    flex: none;
    padding-left: 4px;
    padding-right: 1px;
    background: linear-gradient(#fcfcfc, #efefef);
    border-radius: 2px;
}

.toolbar.grow {
    flex: 1;
}

.toolbar.file {
    width: 149px;
    padding-left: 2px;
}

.toolbar.standard {
    width: 551px;
    padding-left: 3px;
}

.toolbar.view {
    padding-left: 1px;
    padding-right: 4px;
}

.tool {
    display: flex;
    align-items: center;
    gap: 4px;
    height: 23px;
    padding: 0 3px;
    flex: none;
}

.tool:disabled {
    color: #8b8b8b;
}

.tool:disabled .icon {
    color: #a8a8a8;
}

.tool.on {
    background: #dcebf8;
    box-shadow: 0 0 0 1px #0078d7;
}

.tool.split {
    background: #fff;
    padding-right: 0;
}

.arrow {
    width: 12px;
    margin-left: -4px;
    height: 3px;
    display: flex;
    justify-content: center;
    padding-left: 6px;
}

.arrow::before {
    content: "";
    border: 3px solid transparent;
    border-top-color: currentColor;
    border-bottom: 0;
}

.arrow.tight {
    width: 9px;
    padding-left: 3px;
}

.tool.split .arrow {
    width: 12px;
    height: 23px;
    margin-left: -1px;
    padding-left: 0;
    align-items: center;
    background: #f4f4f4;
}

.sep {
    width: 1px;
    height: 16px;
    margin: 0 2px;
    background: #b4b4b4;
}

.grip {
    width: 2px;
    height: 16px;
    margin-right: 1px;
    background: repeating-linear-gradient(#b8b8b8 0 2px, transparent 2px 4px);
}

.more {
    margin-left: auto;
    padding-bottom: 12px;
    font-size: 14px;
    font-weight: 600;
    line-height: 12px;
}

.combo {
    position: relative;
    width: 69px;
    height: 22px;
    margin-right: 2px;
    background: linear-gradient(90deg, transparent calc(100% - 11px), #f4f4f4 0) #fff;
}

.combo.short {
    width: 57px;
}

.combo select {
    appearance: none;
    width: 100%;
    height: 22px;
    padding-left: 3px;
}

.combo::after {
    content: "";
    position: absolute;
    right: 3px;
    top: 9px;
    border: 3px solid transparent;
    border-top-color: #000;
    border-bottom: 0;
    pointer-events: none;
}

.combo.off {
    width: 56px;
    border: 1px solid #6d6d6d;
    background: #f0f0f0;
}

.combo.off::after {
    border-top-color: #777;
}

.combo.off select {
    height: 20px;
}

.toolbar.stub {
    width: 34px;
}

/* module navigation */
.main {
    display: flex;
    flex: 1;
    min-height: 0;
    padding-top: 2px;
}

.nav {
    width: 167px;
    flex: none;
    display: flex;
    flex-direction: column;
    padding: 0 2px 2px;
    border-right: 1px solid #a0a0a0;
    font-family: "Liberation Serif", "Noto Sans CJK SC", serif;
}

.nav-title {
    display: flex;
    align-items: center;
    justify-content: space-between;
    height: 16px;
    flex: none;
    margin: 0 -1px 2px -2px;
    background: #0054e3;
    color: #fff;
    font-size: 13px;
}

.nav-title svg {
    width: 30px;
    height: 12px;
    margin-right: 3px;
}

.nav-tab {
    height: 22px;
    flex: none;
    border-bottom: 1px solid #a0a0a0;
    border-top: 1px solid #fff;
    background: #f0f0f0;
}

.nav-tools {
    height: 27px;
    flex: none;
    padding: 6px;
    background: linear-gradient(#fdfdfd, #f0f0f0);
}

.nav-tools svg {
    width: 44px;
    height: 16px;
}

.tree-box {
    flex: 1;
    min-height: 0;
    display: flex;
    flex-direction: column;
    margin: 0 1px 2px;
    border: 1px solid #828790;
    background: #fff;
}

.tree-view {
    display: flex;
    flex: 1;
    min-height: 0;
}

.tree {
    flex: 1;
    min-width: 0;
    overflow: hidden;
    margin: 0;
    padding: 0;
    list-style: none;
}

.tree li {
    display: flex;
    align-items: center;
    gap: 5px;
    height: 16px;
    padding-left: 42px;
    position: relative;
}

.tree li::before {
    content: "";
    position: absolute;
    left: 12px;
    top: 0;
    width: 20px;
    height: 16px;
    border-left: 1px dotted #888;
    border-right: 1px dotted #888;
}

.tree li::after {
    content: "";
    position: absolute;
    left: 32px;
    top: 8px;
    width: 9px;
    border-top: 1px dotted #888;
}

.tree li.group {
    padding-left: 23px;
    gap: 4px;
}

.tree li.group::before {
    left: 9px;
    top: 3px;
    width: 7px;
    height: 7px;
    border: 0;
    border-right: 2px solid #444;
    border-bottom: 2px solid #444;
    transform: rotate(45deg);
}

.tree li.group::after {
    left: 19px;
    width: 4px;
}

.tree li.extra .icon:last-child {
    margin-left: -4px;
}

.tree .selected span {
    padding: 0 4px;
    margin: 0 -4px;
    background: #d9d9d9;
}

.vscroll {
    width: 16px;
    flex: none;
    display: flex;
    flex-direction: column;
    align-items: center;
    padding: 4px 0;
    background: #f0f0f0;
}

.chev {
    width: 10px;
    height: 10px;
    color: #555;
    stroke-width: 2;
}

.vscroll .thumb {
    flex: 1;
    width: 15px;
    background: #cdcdcd;
}

.vscroll .chev:first-child {
    margin-bottom: 190px;
}

.vscroll .chev:last-child {
    margin-top: 12px;
}

.hscroll {
    display: flex;
    align-items: center;
    height: 16px;
    flex: none;
    padding: 0 4px;
    gap: 4px;
    background: #f0f0f0;
}

.hscroll .thumb {
    height: 15px;
    width: 68%;
    background: #cdcdcd;
}

.hscroll .chev:last-child {
    margin-left: 5px;
}

/* working area */
.work {
    flex: 1;
    min-width: 0;
    display: flex;
    flex-direction: column;
}

.canvas {
    position: relative;
    flex: 304;
    min-height: 0;
    overflow: hidden;
    background: #000;
}

.scene {
    width: 100%;
    height: 100%;
    stroke: none;
    fill: #fff;
}

.scene .green {
    stroke: #008000;
    fill: none;
}

.scene .red {
    stroke: #f00;
    fill: none;
}

.scene .white {
    stroke: #fff;
    stroke-width: 2px;
    fill: none;
}

.scene .dashes {
    stroke-width: 4px;
    stroke-dasharray: 8 8;
}

.scene .yellow {
    stroke: #ff0;
    stroke-width: 2px;
    fill: none;
}

.scene .mesh {
    stroke: #9c8f89;
    fill: none;
}

.scene .ring {
    stroke: #777;
    fill: none;
}

.scene .mark {
    font-family: "Liberation Sans", sans-serif;
    font-size: 15px;
    text-anchor: middle;
    fill: #ddd;
}

.scene .label {
    font-family: "Liberation Mono", monospace;
    font-size: 27px;
    fill: #e4e4e4;
}

.scene .size {
    font-family: "Liberation Sans", sans-serif;
    font-size: 15px;
    fill: #ccc;
}

.float-panel {
    position: absolute;
    left: 103px;
    top: 3px;
    width: 166px;
    height: 178px;
    display: flex;
    flex-direction: column;
    padding: 0 1px 1px;
    background: #fff;
    border-bottom: 1px solid #888;
}

.float-panel h2 {
    margin: 0;
    padding: 7px 7px 8px;
    font-size: 12px;
    font-weight: 400;
    color: #999;
}

.checks {
    flex: 1;
    padding: 1px 3px;
    border: 1px solid #828790;
}

.checks label {
    display: flex;
    align-items: center;
    gap: 4px;
    height: 12px;
    line-height: 12px;
}

input[type="checkbox"] {
    appearance: none;
    position: relative;
    width: 11px;
    height: 11px;
    flex: none;
    border: 1px solid #888;
    background: #fff;
}

input[type="checkbox"]:checked::after {
    content: "";
    position: absolute;
    left: 3px;
    top: 0;
    width: 3px;
    height: 6px;
    border: solid #333;
    border-width: 0 1px 1px 0;
    transform: rotate(45deg);
}

/* snapping */
.toolrow.snap {
    height: 33px;
    padding-top: 2px;
}

.dim {
    color: #777;
    font-size: 13px;
}

.spin {
    position: relative;
    width: 58px;
    height: 23px;
    border: 1px solid #777;
    background: #f0f0f0;
    color: #777;
}

.spin.wide {
    width: 68px;
}

.spin input {
    width: 100%;
    height: 21px;
    padding-right: 18px;
    text-align: right;
}

.spin::before,
.spin::after {
    content: "";
    position: absolute;
    right: 4px;
    border: 3px solid transparent;
}

.spin::before {
    top: 3px;
    border-top: 0;
    border-bottom-color: #555;
}

.spin::after {
    bottom: 3px;
    border-bottom: 0;
    border-top-color: #555;
}

.turn {
    display: flex;
    align-items: center;
    gap: 8px;
    padding-right: 4px;
}

/* rebar sheet */
.panel {
    flex: 202;
    min-height: 0;
    display: flex;
}

.panel-grip {
    width: 12px;
    flex: none;
    padding: 1px;
    background: radial-gradient(circle at 2px 2px, #bbb 1px, transparent 1px) 1px 14px / 5px 5px;
}

.panel-grip svg {
    width: 10px;
    height: 10px;
    background: #fff;
}

.panel-body {
    flex: 1;
    min-width: 0;
    display: flex;
    flex-direction: column;
}

.toolbar.record {
    padding-left: 1px;
}

.record .sep {
    margin: 0 3px;
}

.total {
    padding: 0 3px;
}

.sheet {
    flex: 1;
    min-height: 0;
    display: flex;
    flex-direction: column;
    margin: 0 2px 2px 0;
    border: 1px solid #a0a0a0;
    background: #fff;
    font-family: "Liberation Serif", "Noto Sans CJK SC", serif;
}

.sheet-view {
    flex: 1;
    min-height: 0;
    overflow: hidden;
}

.sheet table {
    width: 1217px;
    table-layout: fixed;
    border-collapse: collapse;
}

.sheet th,
.sheet td {
    height: 19px;
    padding: 0;
    overflow: hidden;
    border-right: 1px solid #c0c0c0;
    border-bottom: 1px solid #c0c0c0;
    font-weight: 400;
}

.sheet thead th {
    height: 20px;
    background: linear-gradient(#fff, #f2f2f2);
}

.sheet thead th.current {
    background: linear-gradient(#fbdc9c, #f3c265);
    color: #60004c;
}

.sheet tbody th {
    background: #ffd58d;
    color: #60004c;
}

.sheet td.current {
    background: #dbeaf9;
    border-right: 1px solid #000;
}

.w33 { width: 33px; }
.w36 { width: 36px; }
.w38 { width: 38px; }
.w39 { width: 39px; }
.w49 { width: 49px; }
.w56 { width: 56px; }
.w61 { width: 61px; }
.w73 { width: 73px; }
.w81 { width: 81px; }
.w156 { width: 156px; }
.w166 { width: 166px; }
.w201 { width: 201px; }

.sheet .hscroll .thumb {
    width: 65%;
}

.sheet .hscroll .chev:last-child {
    margin-left: auto;
}

/* status */
.statusbar {
    display: flex;
    gap: 3px;
    height: 21px;
    flex: none;
    padding-top: 1px;
    font-family: "Liberation Serif", "Noto Sans CJK SC", serif;
}

.statusbar span {
    padding: 1px 1px 0;
    border: 1px solid #d4d4d4;
    background: linear-gradient(#fff, #f0f0f0);
}

.statusbar .pos {
    width: 148px;
}

.statusbar .height {
    width: 77px;
}

.statusbar .base {
    width: 97px;
}

.statusbar .count {
    width: 48px;
}

.statusbar .fill {
    flex: 1;
}

.statusbar .fps {
    width: 70px;
}

/* taskbar */
.taskbar {
    display: flex;
    align-items: center;
    height: 40px;
    flex: none;
    background: #000b0e;
    color: #fff;
}

.taskbar svg {
    width: 16px;
    height: 16px;
}

.start {
    width: 48px;
    height: 40px;
    display: flex;
    align-items: center;
    justify-content: center;
    background: #000;
}

.start svg {
    stroke: none;
}

.search {
    display: flex;
    align-items: center;
    gap: 5px;
    width: 344px;
    height: 40px;
    padding: 0 12px 0 9px;
    background: #333;
}

.search .ring-icon {
    width: 22px;
    height: 22px;
    stroke-width: 3;
}

.search input {
    flex: 1;
    font-size: 14px;
}

.search input::placeholder {
    color: #999;
}

.search .mic {
    color: #ccc;
}

.apps {
    display: flex;
}

.apps button {
    display: flex;
    align-items: center;
    justify-content: center;
    width: 48px;
    height: 40px;
    position: relative;
}

.apps button.wide {
    width: 50px;
}

.apps svg {
    width: 23px;
    height: 23px;
}

.apps .run::after {
    content: "";
    position: absolute;
    left: 4px;
    right: 4px;
    bottom: 0;
    height: 2px;
    background: #76b9ed;
}

.apps .active {
    background: #343c3f;
}

.apps .active::after {
    left: 0;
    right: 0;
}

.c-silver {
    color: #e8e8e8;
}

.c-edge {
    color: #0078d7;
}

.c-ie {
    color: #4ab4f0;
}

.tray {
    display: flex;
    align-items: center;
    gap: 9px;
    margin-left: auto;
    margin-right: 16px;
}

.tray .c-wifi {
    width: 20px;
    height: 20px;
    margin: 0 2px 0 5px;
    color: #5fd80c;
}

.tray .kbd {
    width: 24px;
}

.ime {
    padding: 0 1px;
    font-size: 18px;
}

.clock {
    display: flex;
    flex-direction: column;
    align-items: center;
    width: 62px;
    line-height: 19px;
}

.notify {
    position: relative;
    width: 58px;
    height: 40px;
    padding-left: 16px;
    background: #000;
}

.notify svg {
    width: 22px;
    height: 22px;
}

.notify b {
    position: absolute;
    left: 26px;
    top: 18px;
    width: 16px;
    height: 16px;
    border: 1px solid #888;
    border-radius: 50%;
    background: #222;
    font-size: 11px;
    line-height: 14px;
}

/* desktop widgets over the window */
.netball {
    position: absolute;
    left: 1008px;
    top: -30px;
    width: 47px;
    height: 47px;
    border: 1px solid #2f9c4a;
    border-radius: 50%;
    background: #43c463;
    box-shadow: 0 1px 4px #777;
    color: #fff;
    font-weight: 700;
    line-height: 74px;
    text-align: center;
}

.nettool {
    position: absolute;
    left: 937px;
    top: 20px;
    width: 120px;
    height: 51px;
    display: flex;
    align-items: center;
    gap: 6px;
    padding-left: 6px;
    border: 1px solid #ccc;
    border-radius: 26px;
    background: #fff;
    box-shadow: 0 2px 6px #999;
    color: #666;
}

.nettool .disc {
    width: 38px;
    height: 38px;
    padding: 5px;
    border-radius: 50%;
    background: #27ca6e;
    color: #fff;
}

.disc svg {
    width: 28px;
    height: 28px;
}

.nettool p {
    display: flex;
    align-items: center;
    gap: 4px;
    margin: 0;
    line-height: 20px;
}

.nettool p svg {
    width: 10px;
    height: 12px;
}

.imebar {
    position: absolute;
    left: 776px;
    top: 16px;
    width: 200px;
    height: 24px;
    display: flex;
    align-items: center;
    justify-content: space-between;
    padding: 0 4px 0 0;
    border: 1px solid #b0c4de;
    background: #fff;
    color: #1f76cc;
}

.imebar svg {
    width: 16px;
    height: 16px;
}

.imebar .imelogo {
    width: 28px;
    height: 28px;
    margin-left: -8px;
}

.imebar .pale {
    color: #b4c4dc;
}
```
